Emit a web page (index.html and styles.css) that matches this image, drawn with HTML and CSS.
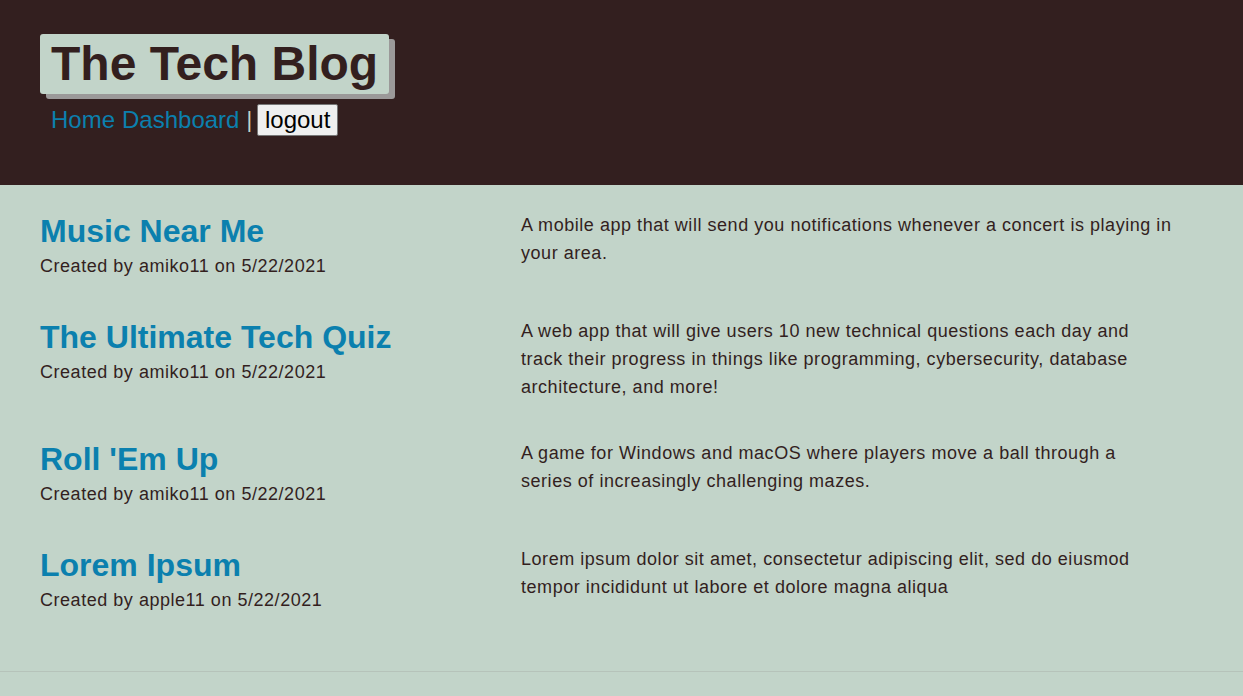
FILE: index.html
```html
<!DOCTYPE html>
<html lang="en">
<head>
<meta charset="utf-8">
<title>The Tech Blog</title>
<link rel="stylesheet" href="styles.css">
</head>
<body>
<header class="site-header">
  <h1 class="brand">The Tech Blog</h1>
  <nav class="nav">
    <a class="nav-link" href="#">Home</a>
    <a class="nav-link" href="#">Dashboard</a>
    <span class="nav-sep">|</span>
    <button class="logout" type="button">logout</button>
  </nav>
</header>
<main class="posts">
  <article class="post">
    <div class="post-head">
      <h2 class="post-title">Music Near Me</h2>
      <p class="post-meta">Created by amiko11 on 5/22/2021</p>
    </div>
    <p class="post-body">A mobile app that will send you notifications whenever a concert is playing in your area.</p>
  </article>
  <article class="post">
    <div class="post-head">
      <h2 class="post-title">The Ultimate Tech Quiz</h2>
      <p class="post-meta">Created by amiko11 on 5/22/2021</p>
    </div>
    <p class="post-body">A web app that will give users 10 new technical questions each day and track their progress in things like programming, cybersecurity, database architecture, and more!</p>
  </article>
  <article class="post">
    <div class="post-head">
      <h2 class="post-title">Roll 'Em Up</h2>
      <p class="post-meta">Created by amiko11 on 5/22/2021</p>
    </div>
    <p class="post-body">A game for Windows and macOS where players move a ball through a series of increasingly challenging mazes.</p>
  </article>
  <article class="post">
    <div class="post-head">
      <h2 class="post-title">Lorem Ipsum</h2>
      <p class="post-meta">Created by apple11 on 5/22/2021</p>
    </div>
    <p class="post-body">Lorem ipsum dolor sit amet, consectetur adipiscing elit, sed do eiusmod tempor incididunt ut labore et dolore magna aliqua</p>
  </article>
</main>
<footer class="site-footer"></footer>
</body>
</html>
```

FILE: styles.css
```css
* {
  box-sizing: border-box;
}

html, body {
  margin: 0;
  padding: 0;
}

body {
  background: #c2d4c9;
  color: #331f1e;
  font-family: "Liberation Sans", Arial, Helvetica, sans-serif;
  min-height: 696px;
}

.site-header {
  background: #331f1f;
  height: 185px;
  padding: 34px 40px 0;
}

.brand {
  display: inline-block;
  margin: 0;
  background: #c2d4c9;
  color: #331f1e;
  font-size: 48px;
  font-weight: bold;
  line-height: 60px;
  height: 60px;
  padding: 0 11px 0 11px;
  border-radius: 3px;
  box-shadow: 6px 5px 0 #9b9999;
}

.nav {
  display: flex;
  align-items: center;
  gap: 7px;
  margin: 10px 0 0 11px;
  height: 32px;
  font-size: 24px;
}

.nav-link {
  color: #0b80ae;
  text-decoration: none;
}

.nav-sep {
  color: #c2d4c9;
  font-size: 22px;
}

.logout {
  flex-shrink: 0;
  font-family: "Liberation Sans", Arial, Helvetica, sans-serif;
  font-size: 24px;
  color: #000;
  background: #efefef;
  border: 1px solid #767676;
  border-radius: 2px;
  height: 32px;
  width: 81px;
  margin-left: -2px;
  padding: 0;
  line-height: 28px;
}

.posts {
  display: flex;
  flex-direction: column;
  gap: 38px;
  padding: 26px 40px 58px;
}

.post {
  display: grid;
  grid-template-columns: 481px 651px;
  align-items: start;
}

.post-head {
  display: flex;
  flex-direction: column;
}

.post-title {
  margin: 0;
  color: #0b80ae;
  font-size: 32px;
  font-weight: bold;
  line-height: 40px;
}

.post-meta {
  margin: 2px 0 0;
  font-size: 18px;
  line-height: 26px;
  letter-spacing: 0.53px;
}

.post-body {
  margin: 0;
  font-size: 18px;
  line-height: 28px;
  letter-spacing: 0.54px;
}

.site-footer {
  border-top: 1px solid #b6c3ba;
  height: 26px;
}
```
